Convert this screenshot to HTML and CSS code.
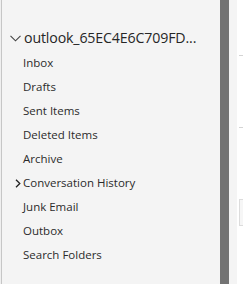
FILE: index.html
```html
<!DOCTYPE html>
<html>
<head>
<meta charset="utf-8">
<link rel="stylesheet" href="styles.css">
</head>
<body>
<div class="app">
  <div class="edge"></div>
  <nav class="pane">
    <div class="account">
      <svg class="chev-down" width="11" height="7" viewBox="0 0 11 7"><path d="M0.5 0.8 L5.5 5.8 L10.5 0.8" fill="none" stroke="#444" stroke-width="1.1"/></svg>
      <span class="acct-name">outlook_65EC4E6C709FD...</span>
    </div>
    <ul class="folders">
      <li class="folder">Inbox</li>
      <li class="folder">Drafts</li>
      <li class="folder">Sent Items</li>
      <li class="folder">Deleted Items</li>
      <li class="folder">Archive</li>
      <li class="folder has-sub"><svg class="chev-right" width="6" height="9" viewBox="0 0 6 9"><path d="M1 0.8 L4.8 4.5 L1 8.2" fill="none" stroke="#222" stroke-width="1.3"/></svg>Conversation History</li>
      <li class="folder">Junk Email</li>
      <li class="folder">Outbox</li>
      <li class="folder">Search Folders</li>
    </ul>
  </nav>
  <div class="scrollbar"></div>
  <div class="gutter"></div>
  <div class="main">
    <div class="rule rule-a"></div>
    <div class="rule rule-b"></div>
    <div class="box"></div>
  </div>
</div>
</body>
</html>
```
FILE: styles.css
```css
html, body {
  margin: 0;
  padding: 0;
  background: #ffffff;
}
.app {
  display: flex;
  height: 284px;
  width: 243px;
  overflow: hidden;
  font-family: "Open Sans", "Noto Sans", sans-serif;
}
.edge {
  width: 1px;
  background: #efefef;
  border-right: 1px solid #c6c6c6;
}
.pane {
  width: 218px;
  background: #f4f4f4;
  padding-top: 26px;
  box-sizing: border-box;
}
.account {
  display: flex;
  align-items: center;
  height: 22px;
  padding-left: 8px;
  white-space: nowrap;
}
.chev-down {
  margin-right: 3px;
  margin-top: 2px;
}
.acct-name {
  font-size: 14.2px;
  color: #262626;
  letter-spacing: -0.15px;
}
.folders {
  list-style: none;
  margin: 0;
  padding: 0;
  margin-top: 3px;
}
.folder {
  height: 24px;
  line-height: 24px;
  padding-left: 21px;
  font-size: 11.5px;
  color: #2b2b2b;
  white-space: nowrap;
  position: relative;
}
.chev-right {
  position: absolute;
  left: 13px;
  top: 8px;
}
.scrollbar {
  width: 9px;
  background: #737373;
}
.gutter {
  width: 8px;
  background: #f4f4f4;
}
.main {
  flex: 1;
  background: #ffffff;
  position: relative;
}
.rule {
  position: absolute;
  left: 2px;
  right: 0;
  height: 1px;
  background: #d4d4d4;
}
.rule-a { top: 55px; }
.rule-b { top: 127px; }
.box {
  position: absolute;
  left: 2px;
  top: 199px;
  width: 10px;
  height: 25px;
  border: 1px solid #dcdcdc;
  background: #f6f6f6;
}
```
